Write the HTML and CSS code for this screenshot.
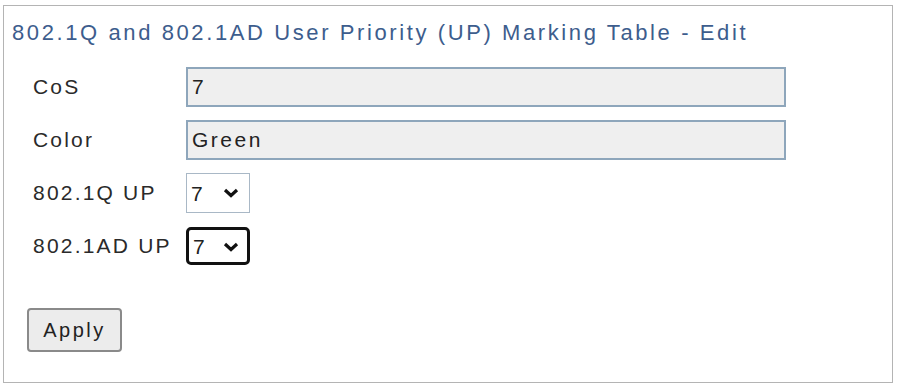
FILE: index.html
```html
<!DOCTYPE html>
<html lang="en">
<head>
    <meta charset="UTF-8">
    <title>802.1Q and 802.1AD User Priority (UP) Marking Table - Edit</title>
    <link rel="stylesheet" href="styles.css">
</head>
<body>
    <div class="panel">
        <h2 class="panel-title">802.1Q and 802.1AD User Priority (UP) Marking Table - Edit</h2>
        <form class="edit-form">
            <div class="row">
                <label>CoS</label>
                <input type="text" class="ro-input" value="7" readonly>
            </div>
            <div class="row">
                <label>Color</label>
                <input type="text" class="ro-input" value="Green" readonly>
            </div>
            <div class="row">
                <label>802.1Q UP</label>
                <div class="select-wrap">
                    <select class="up-select">
                        <option>0</option><option>1</option><option>2</option><option>3</option>
                        <option>4</option><option>5</option><option>6</option><option selected>7</option>
                    </select>
                    <svg class="chev" width="16" height="10" viewBox="0 0 16 10"><path d="M2 2 L8 7.5 L14 2" fill="none" stroke="#111" stroke-width="3.2"/></svg>
                </div>
            </div>
            <div class="row">
                <label>802.1AD UP</label>
                <div class="select-wrap">
                    <select class="up-select focused">
                        <option>0</option><option>1</option><option>2</option><option>3</option>
                        <option>4</option><option>5</option><option>6</option><option selected>7</option>
                    </select>
                    <svg class="chev" width="16" height="10" viewBox="0 0 16 10"><path d="M2 2 L8 7.5 L14 2" fill="none" stroke="#111" stroke-width="3.2"/></svg>
                </div>
            </div>
            <div class="actions">
                <button type="button" class="apply-btn">Apply</button>
            </div>
        </form>
    </div>
</body>
</html>
```

FILE: styles.css
```css
body {
    margin: 0;
    background: #fff;
    font-family: "Liberation Sans", Arial, sans-serif;
    color: #222;
}
.panel {
    margin: 5px 0 0 3px;
    width: 888px;
    height: 376px;
    border: 1px solid #b4b4b4;
}
.panel-title {
    margin: 0;
    padding: 15px 0 0 8px;
    font-size: 22px;
    font-weight: normal;
    letter-spacing: 2.6px;
    color: #3d5d8d;
    line-height: 24px;
}
.edit-form { padding: 22px 0 0 29px; }
.row {
    display: flex;
    align-items: center;
    height: 40px;
    margin-bottom: 13px;
}
.row label {
    width: 153px;
    font-size: 21px;
    letter-spacing: 2.2px;
    color: #2a2a2a;
}
.ro-input {
    box-sizing: border-box;
    width: 600px;
    height: 40px;
    padding: 0 4px;
    font-family: inherit;
    font-size: 21px;
    letter-spacing: 2.5px;
    color: #222;
    background: #efefef;
    border: 2px solid #8ea6bb;
    border-radius: 0;
}
.select-wrap { position: relative; }
.up-select {
    appearance: none;
    -webkit-appearance: none;
    box-sizing: border-box;
    width: 64px;
    height: 40px;
    padding: 0 0 0 4px;
    font-family: inherit;
    font-size: 21px;
    color: #222;
    background: #fff;
    border: 1px solid #a9b8c6;
    border-radius: 0;
}
.up-select.focused {
    height: 38px;
    border: 3px solid #111;
    border-radius: 5px;
}
.chev {
    position: absolute;
    right: 11px;
    top: 15px;
    pointer-events: none;
}
.actions { padding-top: 29px; margin-left: -6px; }
.apply-btn {
    width: 95px;
    height: 44px;
    padding: 0;
    font-family: inherit;
    font-size: 20px;
    letter-spacing: 2.5px;
    color: #222;
    background: #ececec;
    border: 2px solid #8a8a8a;
    border-radius: 4px;
}
```
